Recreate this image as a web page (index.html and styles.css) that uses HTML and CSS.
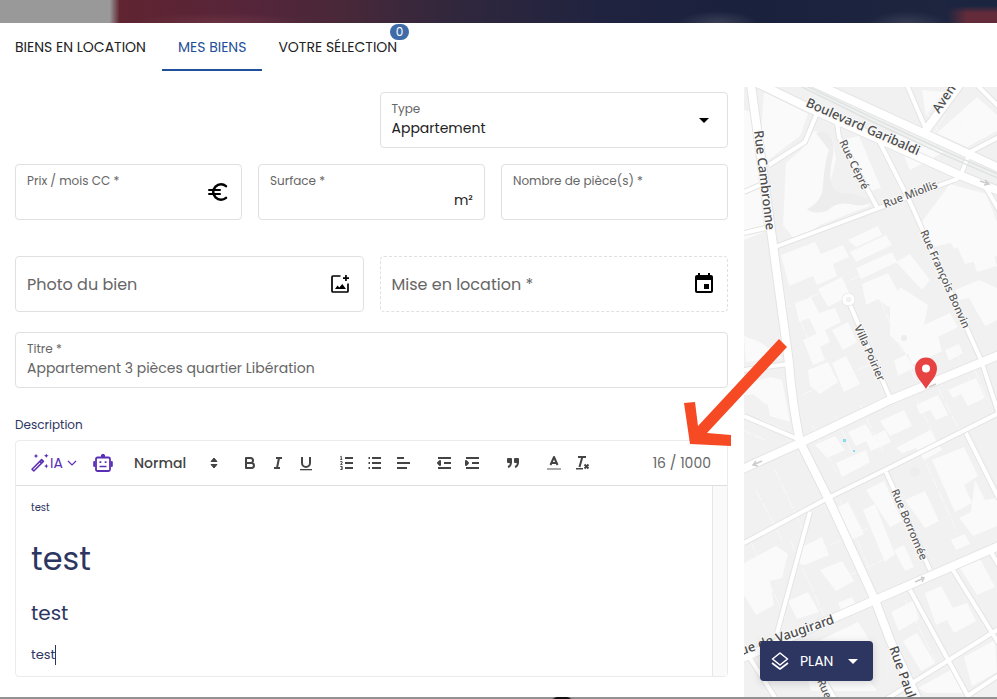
FILE: index.html
```html
<!DOCTYPE html>
<html lang="fr">
<head>
<meta charset="utf-8">
<meta name="viewport" content="width=device-width, initial-scale=1">
<title>Mes biens</title>
<link rel="stylesheet" href="styles.css">
</head>
<body>
<div class="backdrop-top"></div>
<main class="dialog">
  <nav class="tabs">
    <a class="tab" href="#location">BIENS EN LOCATION</a>
    <a class="tab active" href="#biens" aria-current="page">MES BIENS</a>
    <a class="tab" href="#selection">VOTRE SÉLECTION<span class="badge">0</span></a>
  </nav>
  <div class="content">
    <form class="form">
      <div class="row halves">
        <div class="field second">
          <div class="stack">
            <label for="type">Type</label>
            <select id="type"><option>Appartement</option></select>
          </div>
          <svg class="icon" viewBox="0 0 24 24"><path d="M7 10l5 5 5-5z"/></svg>
        </div>
      </div>
      <div class="row thirds">
        <div class="field">
          <div class="stack"><label for="prix">Prix / mois CC *</label><input id="prix" type="text"></div>
          <svg class="icon" viewBox="0 0 24 24"><g fill="none" stroke="#000" stroke-width="2.5" stroke-linecap="round"><path d="M20 6.100C18.600 4.900 16.900 4.250 15 4.250a7.750 7.750 0 1 0 0 15.500c1.900 0 3.600-.650 5-1.850"/><path d="M3 10H14M3 14H14" stroke-width="2"/></g></svg>
        </div>
        <div class="field">
          <div class="stack"><label for="surface">Surface *</label><input id="surface" type="text"></div>
          <span class="unit">m²</span>
        </div>
        <div class="field">
          <div class="stack"><label for="pieces">Nombre de pièce(s) *</label><input id="pieces" type="text"></div>
        </div>
      </div>
      <div class="row halves spaced">
        <div class="field large">
          <input type="text" aria-label="Photo du bien" placeholder="Photo du bien">
          <svg class="icon" viewBox="0 0 24 24"><path d="M12.500 4H5a1 1 0 0 0-1 1v14a1 1 0 0 0 1 1h14a1 1 0 0 0 1-1v-7.500" fill="none" stroke="#000" stroke-width="1.700"/><path d="M17.100 3h1.700v2.200H21v1.700h-2.200V9h-1.700V6.900H15V5.200h2.100zM7 17l2.500-3.500 1.800 2.100L14.300 12l3.700 5z"/></svg>
        </div>
        <div class="field large dashed">
          <input type="text" aria-label="Mise en location" placeholder="Mise en location *">
          <svg class="icon" viewBox="0 0 24 24"><path d="M17 12h-5v5h5v-5zM16 1v2H8V1H6v2H5c-1.110 0-1.990.900-1.990 2L3 19c0 1.100.890 2 2 2h14c1.100 0 2-.900 2-2V5c0-1.100-.900-2-2-2h-1V1h-2zm3 18H5V8h14v11z"/></svg>
        </div>
      </div>
      <div class="row title-row">
        <div class="field">
          <div class="stack"><label for="titre">Titre *</label><input id="titre" type="text" placeholder="Appartement 3 pièces quartier Libération"></div>
        </div>
      </div>
      <div class="desc-label" id="desc">Description</div>
      <div class="editor">
        <div class="toolbar">
          <button type="button" class="ai">
            <svg viewBox="0 0 20 20"><path d="M2 16.200 11.600 6.600l1.800 1.800L3.800 18z M9.800 8.400l1.800 1.800" fill="none" stroke="#5b2fb5" stroke-width="1.500" stroke-linejoin="round"/><path d="M10.500 7.500l1.200-1.200 2 2-1.200 1.200zM6 .800l.700 1.500 1.500.700-1.500.700L6 5.200l-.700-1.500L3.800 3l1.500-.700zM16.300.500l.700 1.600 1.600.700-1.600.700-.700 1.600-.700-1.600-1.600-.700 1.600-.700zM16.300 10.800l.700 1.600 1.600.700-1.600.700-.700 1.600-.700-1.600-1.600-.700 1.600-.700z" fill="#5b2fb5"/></svg><span>IA</span><svg class="chev" viewBox="0 0 10 10"><path d="M1 3l4 4 4-4" fill="none" stroke="#5b2fb5" stroke-width="1.200"/></svg>
          </button>
          <button type="button" aria-label="Assistant" class="tool">
            <svg class="bot" viewBox="0 0 20 20" fill="none" stroke="#5b2fb5"><rect x="3" y="4.500" width="14" height="13.500" rx="1.500" stroke-width="1.800"/><path d="M1.200 9v4M18.800 9v4" stroke-width="2" stroke-linecap="round"/><circle cx="10" cy="3" r="1.700" fill="#5b2fb5"/><path d="M6.500 9.200h1.800M11.700 9.200h1.800" stroke-width="1.800"/><path d="M6.500 13.500h7" stroke-width="1.500"/></svg>
          </button>
          <div class="picker">
            <select aria-label="Style"><option>Normal</option></select>
            <svg viewBox="0 0 18 18"><path d="M6 7.500 9 4l3 3.500zM6 10.500 9 14l3-3.500z" fill="#444" stroke="#444" stroke-width="1" stroke-linejoin="round"/></svg>
          </div>
          <div class="group">
            <button type="button" class="tool" aria-label="Gras"><svg viewBox="0 0 18 18"><path class="s" d="M5 4h4.500a2.500 2.500 0 0 1 0 5H5zM5 9h5.500a2.500 2.500 0 0 1 0 5H5z"/></svg></button>
            <button type="button" class="tool" aria-label="Italique"><svg viewBox="0 0 18 18"><path class="s" d="M7 4h6M5 14h6M8 14l2-10"/></svg></button>
            <button type="button" class="tool" aria-label="Souligné"><svg viewBox="0 0 18 18"><path class="s" d="M5 3v6a4.012 4.012 0 0 0 4 4 4.012 4.012 0 0 0 4-4V3"/><path d="M3 15h12v1.300H3z" fill="#444"/></svg></button>
          </div>
          <div class="group">
            <button type="button" class="tool" aria-label="Liste numérotée"><svg viewBox="0 0 18 18"><path class="s" d="M7 4h8M7 9h8M7 14h8"/><path class="t" d="M2.300 2.800l1-.500V5.500M2.300 5.500h2M2.300 7.600h1.800v1.200L2.500 10.400h2M2.300 12.500h1.900v3H2.300M3 14h1"/></svg></button>
            <button type="button" class="tool" aria-label="Liste à puces"><svg viewBox="0 0 18 18"><path class="s" d="M6 4h9M6 9h9M6 14h9M2.500 4h1.500M2.500 9h1.500M2.500 14h1.500"/></svg></button>
            <button type="button" class="tool" aria-label="Alignement"><svg viewBox="0 0 18 18"><path class="s" d="M3 4h7M3 9h13M3 14h10"/></svg></button>
          </div>
          <div class="group">
            <button type="button" class="tool" aria-label="Diminuer le retrait"><svg viewBox="0 0 18 18"><path class="s" d="M3 4h13M9 9h7M3 14h13"/><path d="M5 7v4L3 9z" class="f s"/></svg></button>
            <button type="button" class="tool" aria-label="Augmenter le retrait"><svg viewBox="0 0 18 18"><path class="s" d="M3 4h13M9 9h7M3 14h13"/><path d="M3 7v4l2-2z" class="f s"/></svg></button>
          </div>
          <div class="group">
            <button type="button" class="tool" aria-label="Citation"><svg viewBox="0 0 18 18"><path class="f s" d="M4 5h3v3H4zM11 5h3v3h-3z"/><path class="s" d="M7 8c0 4.031-3 5-3 5M14 8c0 4.031-3 5-3 5"/></svg></button>
          </div>
          <div class="group">
            <button type="button" class="tool" aria-label="Couleur"><svg viewBox="0 0 18 18"><path d="M2 15h14" stroke="#aaa" stroke-width="2"/><path class="s" d="M5.500 11 9 3l3.500 8M7 9h4"/></svg></button>
            <button type="button" class="tool" aria-label="Effacer le format"><svg viewBox="0 0 18 18"><path class="s" d="M5 3h8M6.500 13l2.700-9.500M11.500 10.500l4 4M15.500 10.500l-4 4"/><path d="M3 14h7v1.500H3z" fill="#444"/></svg></button>
          </div>
          <span class="counter">16 / 1000</span>
        </div>
        <div class="editor-body">
          <div class="text" contenteditable="true" role="textbox" aria-multiline="true" aria-labelledby="desc">
            <p class="small">test</p>
            <p class="huge">test</p>
            <p class="big">test</p>
            <p><span class="caret">test</span></p>
          </div>
          <div class="gutter"></div>
        </div>
      </div>
    </form>
    <section class="map" aria-label="Plan">
      <svg class="tiles" viewBox="744 87 253 610" preserveAspectRatio="xMinYMin slice">
        <rect x="744" y="87" width="600" height="800" fill="#f1f1f1"/>
        <g fill="#fafafa">
          <path d="M764 92l44 22-8 22-33 25-6-30zM786 163l16-14 12-18 18 6 4 22-8 34 12 8 32 4-52 20-24 16-13-16zM841 140l18-4 22 52-14 4-22-42zM744 110l8 2 12 120-20 8zM950 184l36 10 11 28v34l-32 8-10-22-26 6-8-25zM894 132l50 20-34 18zM944 92l-22-2 4 26zM977 97l20 18v16l-30 16-30-14z"/>
          <path d="M781 255l34-13 6 12 22-9 6 12-16 7 4 12-20 9-4-9-24 10zM848 240l30-14 4 9-26 12zM850 252l36-17 6 10-36 17zM856 268l36-16 5 10-36 17zM862 284l26-11 14 26-14 8-10-8-12 6zM818 289l24-12 8 18-22 12zM795 304l16-7 8 16 16-5 6 14-24 12-8-16-10 4zM803 340l22-10 5 12-10 5 5 13-12 5zM832 330l16-8 9 20-14 8zM808 370l20-8 10 20-18 12-10-8zM832 363l14-7 14 28-16 8zM890 307l10-20 28 18-4 20 26-12 8 14-20 10 4 14-30 14-10-18-12-12zM896 262l14-8 20 26-8 10zM955 290l24-10 18 8v32l-12 6-16-28-10 2zM898 376l16-8-6-14-14 6zM945 350l14-6 4 9-14 8zM936 218l18-7 16 30-16 8zM970 250l20-8 7 24-20 6z"/>
          <path d="M744 385l26-8 12 3 8 42-20-6-4-22-22 1zM744 336l16 6 22 16-36 4zM754 395l24-8 8 26-22-10z"/>
          <path d="M815 445l20-9 10 14-18 8zM848 432l18-8 7 12 12-6 6 12-20 9-5-10-10 5zM880 421l24-11 8 16-22 10zM916 405l22-10 10 20-12 5-6-10-10 4zM948 390l28-12 9 20-17 8-7-12-8 4zM836 463l30-13 4 12-28 15zM896 448l34-18 12 20-18 10-8-12-14 5zM832 510l16-8 16 32-12 6-14-20zM866 490l18-9 18 40-12 6zM905 500l20-9 14 30-14 7zM932 460l32-13 14 29-14 9 8 18-17 9zM894 550l10-5 10 22-9 4zM863 510l12-6 20 50-10 8zM975 480l10 20 12-2v28l-24 10-14-18 12-6zM951 540l14-6 5 10-14 6z"/>
          <path d="M744 563l32-17 12 8-6 24-12 3 4 24-18 10-12-20zM800 548l22-11 7 18-24 10-10-2zM820 570l22-9 12 20-18 10zM788 601l20-9 11 20-22 7zM838 603l14-6 6 12-15 6zM800 650l58-28 14 22-15 20 20 27h-66zM891 612l22-11 6 18-20 12zM925 593l16-7 12 22 14-5 9 18-22 12-7-13-11 5zM903 641l14-8 18 30-14 8zM960 568l20-9 15 28-18 8zM964 657l31-17 2 32-25 14zM918 688l36-20 12 25h-40z"/>
        </g>
        <g fill="#ededed"><circle cx="904" cy="338" r="3"/><circle cx="915" cy="472" r="5"/><path d="M816 133q20-6 17 22-8 36 8 38 18 0 29 8-5 6-15 4-18-5-28 6-14 4-20-2 16-8 16-24 1-20 6-35z"/></g>
        <g class="parcels">
          <path d="M775 108l28 18M770 120l26 18M790 270l50-20M802 395l80-36M812 425l25 48M835 415l22 48M860 405l23 46M910 385l27 57M932 375l28 57M840 500l30 70M830 545l50-22M850 575l44-20M790 540l36 80M920 450l38 84M880 140l24 58M925 110l18 28M945 115l-12 20M960 120l14 26M800 320l30 70M780 310l80-34M880 300l40 90M930 250l30 65M955 350l20 40M750 540l36 80M765 440l-20-9M785 430l-28-12M775 470l28 60M925 612l34 70M905 600l30 60M756 490l26 50M975 370l12 30"/>
        </g>
        <use href="#minor" class="casing minor-casing"/>
        <use href="#major" class="casing major-casing"/>
        <g class="minor-road">
          <path id="minor" d="M907 85l18 42M977 85l22 22M999 137l-29 15-8 20q-2 6-8 8L775 247M817 113l-12 29-36 23M744 192l16-7M837 123l2 14 39 72M876 135l34 67 71 158 18 55M744 233l26-6M986 188l13 22M848 300l42 98M744 370l44-6M744 416l56 24M744 543l84-45 57-28 114-57M886 472l44 98M966 433l33 66M810 512l-33 121M910 590l60 110M953 570l46 74M991 552l8 14M885 700l107-67 7-4M966 697l33-22M748 655l28 44M808 652l27 47"/>
        </g>
        <g class="major-road">
          <path id="major" d="M751 85l22 160 16 118q3 40 11 79l28 56 47 102 15 40 29 62M738 471l62-28 90-43 109-45M738 660l137-60 124-54M757 83l50 24 150 67 42 17M814 83l109 50 76 35M960 84l-37 50"/>
        </g>
        <path d="M796 84l77 38 67 31 60 26M800 83l75 36 67 31 60 26" fill="none" stroke="#dfe3e2" stroke-width="1.500"/>
        <circle cx="848.500" cy="299.500" r="4.500" fill="none" stroke="#ddd" stroke-width="4.500"/><circle cx="848.500" cy="299.500" r="4.500" fill="#f1f1f1" stroke="#fff" stroke-width="3.500"/>
        <g fill="none" stroke="#ccc" stroke-width="1.500"><path d="M753 465l9-4M756 461l-3 4 5 1M915 582l9-4M921 577l3 1-2 4M980 181l9 3M985 180l4 4-5 1M929 387l7-3"/></g>
        <path d="M843 439h3v3h-3zM853 450h2v2h-2z" fill="#83dbf4"/>
        <g class="street">
          <text class="main" transform="translate(805 106) rotate(23.700)">Boulevard Garibaldi</text>
          <text class="main" transform="translate(754 131) rotate(83)">Rue Cambronne</text>
          <text class="main" transform="translate(939 114) rotate(-56)">Aven</text>
          <text transform="translate(839 142) rotate(64)">Rue Cépré</text>
          <text transform="translate(885 208) rotate(-21)">Rue Miollis</text>
          <text transform="translate(920 232) rotate(66)">Rue François Bonvin</text>
          <text transform="translate(854 327) rotate(66)">Villa Poirier</text>
          <text transform="translate(891 491) rotate(67)">Rue Borromée</text>
          <text class="main" text-anchor="end" transform="translate(835 623) rotate(-19)">Rue de Vaugirard</text>
          <text class="main" transform="translate(889 648) rotate(70)">Rue Paul</text>
          <text transform="translate(817 681) rotate(66)">Rue</text>
        </g>
        <path d="M926 389c-3-6-11-12-11-20.500a11 11 0 0 1 22 0c0 8.500-8 14.500-11 20.500z" fill="#e84343"/><circle cx="926" cy="368.500" r="4" fill="#fff"/>
      </svg>
      <button type="button" class="plan">
        <svg viewBox="0 0 24 24" fill="none" stroke="#fff" stroke-width="1.600" stroke-linejoin="round"><path d="M12 4l7.500 6-7.500 6-7.500-6z"/><path d="M4 14l8 6 8-6"/></svg>
        <span>PLAN</span>
        <svg viewBox="0 0 24 24"><path d="M7 10l5 5 5-5z" fill="#fff"/></svg>
      </button>
    </section>
  </div>
  <svg class="arrow" viewBox="684 339 103 107"><path d="M779 339l8 8-80 86 24 2v11l-41-2-6-41 11-1 3 24z" fill="#f64a25"/></svg>
</main>
<div class="backdrop-bottom"></div>
</body>
</html>
```
FILE: styles.css
```css
* { box-sizing: border-box; }
body {
  margin: 0;
  min-height: 100vh;
  display: flex;
  flex-direction: column;
  font-family: Poppins, Inter, "Open Sans", sans-serif;
  font-size: 14px;
  color: #222;
  background: #fff;
}
button, input, select { font: inherit; color: inherit; border: 0; background: none; padding: 0; margin: 0; }
.backdrop-top {
  height: 23px;
  background:
    linear-gradient(#1c2540 6px, rgba(28, 37, 64, 0) 13px) right / 50px 100% no-repeat,
    radial-gradient(ellipse 90px 10px at 22% 100%, rgba(130, 70, 80, .4), transparent),
    radial-gradient(ellipse 40px 12px at 72% 100%, rgba(80, 85, 105, .6), transparent),
    radial-gradient(ellipse 40px 12px at 91% 100%, rgba(80, 85, 105, .5), transparent),
    linear-gradient(90deg, #999 0, #999 11%, #602431 12%, #56253a 25%, #472839 35%, #30273d 46%, #20233f 60%, #1a213d 75%, #1d253f 95%, #642c3a 97%);
}
.dialog { position: relative; flex: 1; display: flex; flex-direction: column; }
.tabs { display: flex; height: 48px; }
.tab {
  position: relative;
  padding: 0 16px;
  line-height: 48px;
  color: #222;
  text-decoration: none;
}
.tab:first-child { padding-left: 15px; }
.tab.active { color: #1f5099; border-bottom: 2px solid #1f5099; }
.badge {
  position: absolute;
  top: 1px;
  right: 4px;
  padding: 0 6px;
  border-radius: 8px;
  background: #3f6ba8;
  color: #fff;
  font-size: 12px;
  line-height: 16px;
}
.content { flex: 1; margin-top: 16px; display: grid; grid-template-columns: 744fr 253fr; }
.form { padding: 5px 16px 20px 15px; min-width: 0; }
.row { display: grid; gap: 16px; margin-bottom: 16px; }
.halves { grid-template-columns: 1fr 1fr; }
.thirds { grid-template-columns: 1fr 1fr 1fr; }
.spaced { margin: 36px 0 20px; }
.second { grid-column: 2; }
.title-row { margin-bottom: 27px; }
.field {
  display: flex;
  align-items: center;
  height: 56px;
  padding: 0 11px;
  border: 1px solid #e0e0e0;
  border-radius: 4px;
  min-width: 0;
}
.field.dashed { border-style: dashed; }
.stack { flex: 1; min-width: 0; height: 38px; display: flex; flex-direction: column; }
.stack label { font-size: 12px; line-height: 16px; color: #666; }
.stack input, .stack select { width: 100%; height: 22px; line-height: 22px; appearance: none; outline: 0; }
.field input::placeholder { color: #666; opacity: 1; }
.large input { flex: 1; min-width: 0; font-size: 16px; }
.icon { width: 24px; height: 24px; flex: none; }
.unit { align-self: flex-end; line-height: 38px; }
.desc-label { font-size: 12px; line-height: 20px; color: #2d3561; margin-bottom: 5px; }
.editor { border: 1px solid #ebebeb; border-radius: 4px; }
.toolbar {
  display: flex;
  align-items: center;
  gap: 13px;
  height: 45px;
  padding: 0 16px 0 14px;
  border-bottom: 1px solid #dedede;
}
.group { display: flex; }
.tool { width: 28px; height: 24px; display: flex; align-items: center; justify-content: center; }
.tool svg, .picker svg { width: 18px; height: 18px; }
.tool .bot { width: 20px; height: 20px; flex: none; }
.s { fill: none; stroke: #444; stroke-width: 2; stroke-linejoin: round; }
.s.f { fill: #444; }
.t { fill: none; stroke: #444; stroke-width: 1; }
.ai { width: 46px; display: flex; align-items: center; color: #5b2fb5; }
.ai svg { width: 20px; height: 20px; flex: none; }
.ai .chev { width: 10px; height: 10px; margin-left: 4px; }
.picker { width: 93px; padding-left: 4px; display: flex; align-items: center; justify-content: space-between; color: #444; font-weight: 500; }
.picker select { appearance: none; flex: 1; }
.counter { margin-left: auto; color: #666; white-space: nowrap; }
.editor-body { display: flex; }
.text { flex: 1; padding: 15px 15px 11px; color: #2d3561; font-size: 13px; line-height: 20px; outline: 0; }
.text p { margin: 0 0 18px; }
.text p:last-child { margin: 0; }
.text .small { font-size: 10px; line-height: 14px; margin-bottom: 20px; }
.text .huge { font-size: 32px; line-height: 48px; margin-bottom: 16px; }
.text .big { font-size: 20px; line-height: 28px; }
.caret { display: inline-block; border-right: 1px solid #2d3561; }
.gutter { width: 15px; background: #fafafa; border-left: 1px solid #e6e6e6; }
.map { position: relative; overflow: hidden; background: #f1f1f1; }
.tiles { position: absolute; inset: 0; width: 100%; height: 100%; }
.parcels { fill: none; stroke: #f9f9f9; stroke-width: 1px; stroke-dasharray: 12px 3px; }
.casing { fill: none; stroke: #e4e4e4; }
.minor-casing { stroke-width: 6px; }
.major-casing { stroke-width: 10px; }
.minor-road { fill: none; stroke: #fff; stroke-width: 4px; stroke-linejoin: round; }
.major-road { fill: none; stroke: #fff; stroke-width: 8px; }
.street text { font: 500 11px "Noto Sans", sans-serif; fill: #5a5a5a; stroke: #fafafa; stroke-width: 2px; paint-order: stroke; }
.street .main { font-size: 13px; fill: #4c4c4c; }
.plan {
  position: absolute;
  left: 16px;
  bottom: 16px;
  height: 40px;
  padding: 0 8px;
  display: flex;
  align-items: center;
  gap: 8px;
  border-radius: 4px;
  background: #2d3561;
  color: #fff;
  box-shadow: 0 2px 8px rgba(0, 0, 0, .15);
}
.plan svg { width: 24px; height: 24px; }
.arrow { position: absolute; left: 684px; top: 316px; width: 103px; height: 107px; pointer-events: none; }
.backdrop-bottom {
  height: 2px;
  background: radial-gradient(ellipse 10px 3px at 562px 2px, #111 70%, transparent), #929292;
}
```
